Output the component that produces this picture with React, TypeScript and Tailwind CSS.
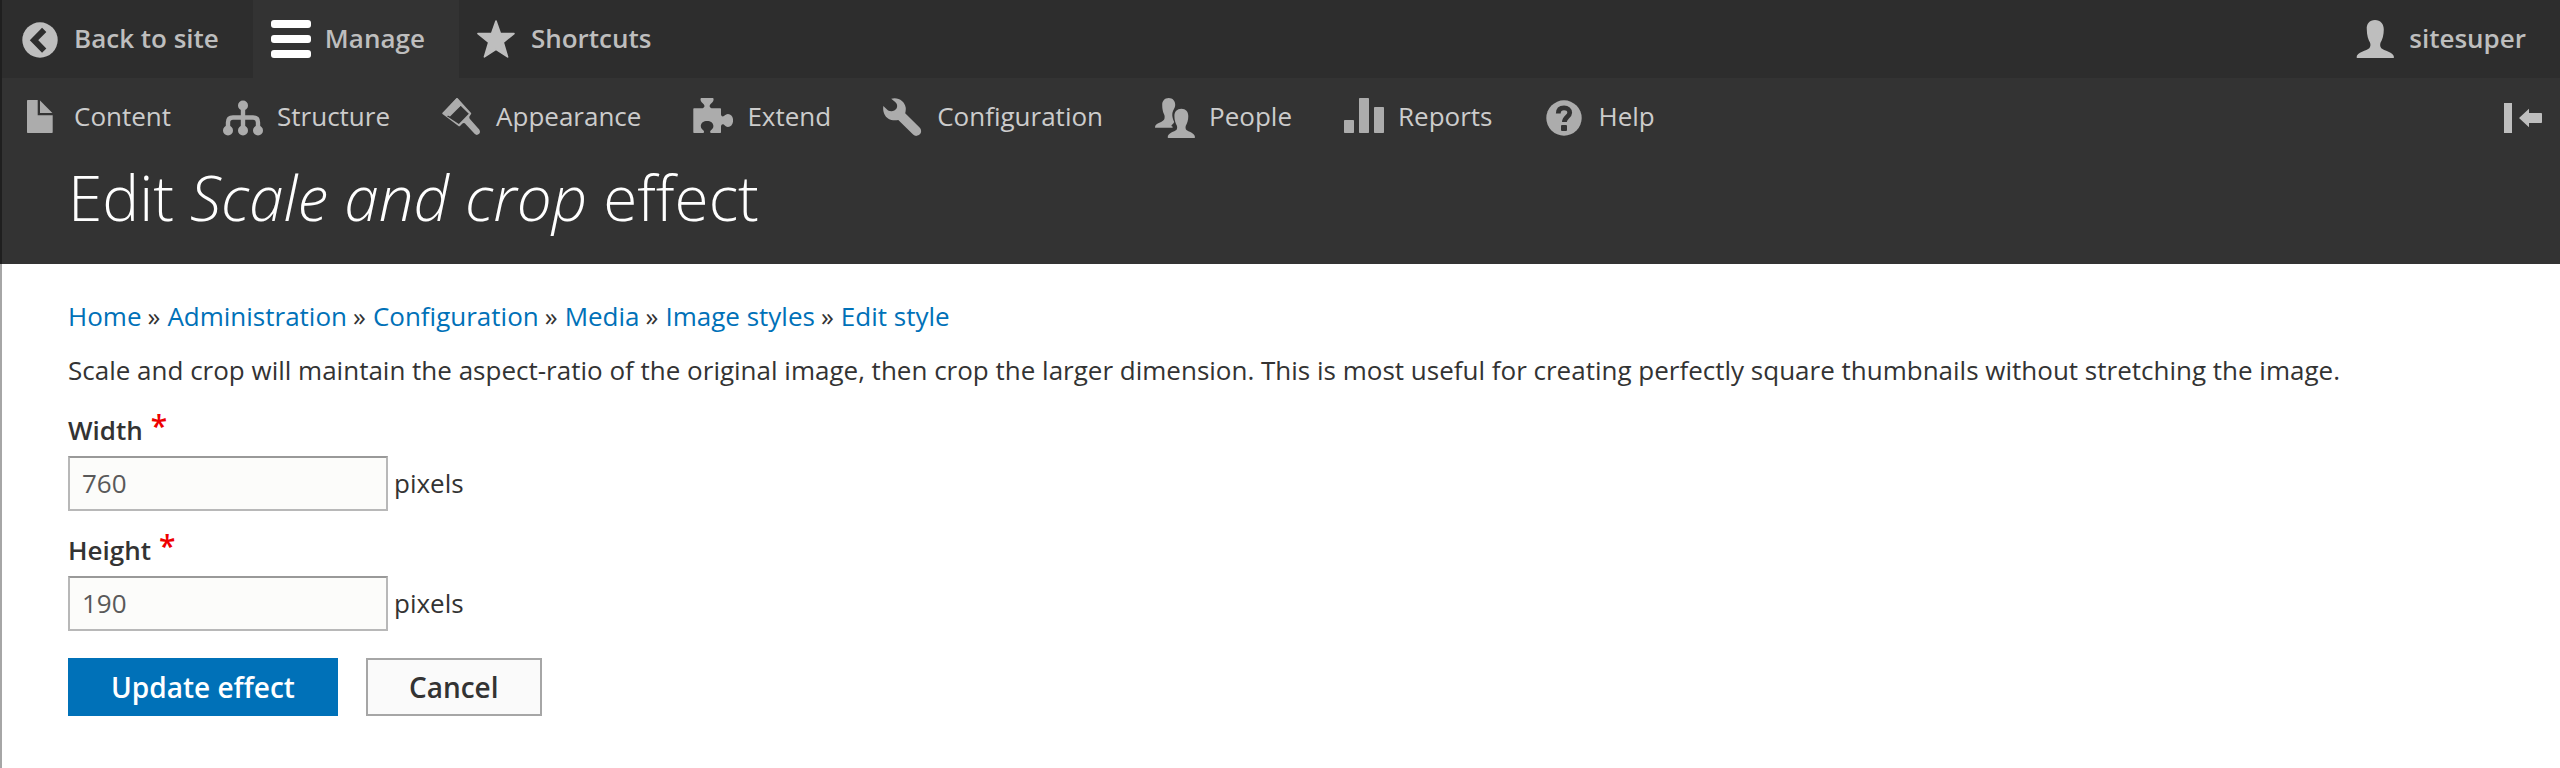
import type { ReactNode } from "react";

function Icon({ children }: { children: ReactNode }) {
  return (
    <svg viewBox="0 0 40 40" className="size-10 shrink-0" fill="currentColor" aria-hidden="true">
      {children}
    </svg>
  );
}

const icons = {
  back: (
    <Icon>
      <circle cx="20" cy="20" r="17.7" />
      <path d="M24.2 9.8 14 20.2 24.2 30.6" fill="none" stroke="#2d2d2d" strokeWidth="6" />
    </Icon>
  ),
  menu: (
    <Icon>
      <rect x="0" y="0" width="40" height="8" rx="3" />
      <rect x="0" y="15" width="40" height="8" rx="3" />
      <rect x="0" y="30" width="40" height="8" rx="3" />
    </Icon>
  ),
  star: (
    <Icon>
      <path
        d="M19 1 23.3 13.3 37 13.6 26.2 22.3 30.6 36.9 19 29.4 7.4 36.9 11.8 22.3 1 13.6 14.7 13.3Z"
        stroke="currentColor"
        strokeWidth="1.6"
        strokeLinejoin="round"
      />
    </Icon>
  ),
  user: (
    <Icon>
      <path d="M20 0c5.500 0 8.800 4 8.800 9.500 0 5.500-1.500 10.500-3.300 13.300-.6 2-.4 4 .8 5.400 2.200 2.200 12.700 4 12.700 9.100 0 .5-.2.700-.7.700h-36c-.5 0-.7-.2-.7-.7 0-5.100 10.500-6.900 12.700-9.100 1.200-1.400 1.400-3.400.8-5.400-1.800-2.800-3.300-7.800-3.300-13.300C11.200 4 14.500 0 20 0Z" />
    </Icon>
  ),
  file: (
    <Icon>
      <path d="M7.700 2h10v15.300h15v17q0 .7-.7.700h-24.300q-.7 0-.7-.7v-31.600q0-.7.7-.7Z" />
      <path d="M20 2.600 32.400 15H20Z" />
    </Icon>
  ),
  structure: (
    <Icon>
      <path
        d="M5 32V24.500q0-5 5-5h20q5 0 5 5V32M20 8v24"
        fill="none"
        stroke="currentColor"
        strokeWidth="4.400"
      />
      <circle cx="20" cy="7.500" r="5" />
      <circle cx="5" cy="32.500" r="5" />
      <circle cx="20" cy="32.500" r="5" />
      <circle cx="35" cy="32.500" r="5" />
    </Icon>
  ),
  brush: (
    <Icon>
      <path
        fillRule="evenodd"
        d="M14.300.3q.7-.6 1.400 0L29.300 15.300q-.4 1.700-1.800 2.900-.5 1.700.4 2.800l9.300 10.500q1.600 2.400 0 4.300-2.300 2-4.400.3l-10-10.900q-1.400-.8-2.900.7-1.200 1.800-2.800 2.500L.5 16q-.5-.6 0-1.200ZM18.600 7.700 5 18.300 16.800 26 26.800 15.800Z"
      />
      <path d="M15 0 20 6.500 8 18.500 1 15.300Z" />
    </Icon>
  ),
  puzzle: (
    <Icon>
      <path d="M.3 10.900q0-.7.700-.7h8.700c1.900-.5 2.300-2.500 1-4C9.500 4.600 7.500 3.800 7.500 1.400 7.500.5 7.900.1 8.700.1h10.700c.8 0 1.200.4 1.200 1.300 0 2.400-2 3.200-3.200 4.800-1.300 1.500-.9 3.500 1 4h8.900q.7 0 .7.700v5.600c.3 1.900 1.700 2.500 3 1.500 1.200-1 2.200-2 4-2 3.200 0 5.100 2.900 5.100 6.400s-1.900 6.500-5.100 6.500c-1.800 0-2.800-1.100-4-2.100-1.300-1-2.700-.4-3 1.500v6q0 .7-.7.700h-8.600c-1.600 0-2.100-1.300-1-2.600 1-1 2.700-1.800 2.700-4.400 0-3.100-2.900-5-6.300-5s-6.300 1.900-6.300 5c0 2.600 1.700 3.400 2.700 4.400 1.100 1.300.6 2.600-1 2.600H1q-.7 0-.7-.7Z" />
    </Icon>
  ),
  wrench: (
    <Icon>
      <path d="M8.200.7C15-1.400 21.800 3.200 22.700 9.500c.3 2-.1 4-.5 5.700L36.600 29.600a4.600 4.600 0 0 1-6.500 7L15.300 21.900C9.500 23.300 3.500 21.200 1.200 15.700 0 13 .1 10.600.3 8l4.800 4.500c3.200 1.400 6.900.6 8.400-1.900 1.200-2.700.7-4.800-1.300-6.600Z" />
    </Icon>
  ),
  people: (
    <Icon>
      <path d="M13.700 0c4 0 6.500 2.900 6.500 6.700 0 1.600-.5 2.900-1.200 4.300-2.500 3.600-2 8.400.2 13.100-.6 1.800-2.800 2.700-2.800 3.800l1.600 1.200-.8.700H.6q-.6 0-.6-.6c0-4.200 8.600-5 9.400-8.200.4-2 .4-3.400-.6-5.200-1-2.400-1.600-5.400-1.600-9.100C7.200 2.900 9.700 0 13.700 0Z" />
      <path d="M26.400 10.700c4.400 0 6.900 2.900 6.900 7.200 0 4-1.100 7.500-2.500 9.800-.5 1.500-.3 3.200.6 4.300C33 33.600 40 34.700 40 39.300q0 .7-.7.700H13.400q-.7 0-.7-.7c0-4.600 7-5.700 8.600-7.300.9-1.100 1.100-2.800.6-4.300-1.400-2.300-2.500-5.800-2.500-9.800 0-4.300 2.600-7.200 7-7.200Z" />
    </Icon>
  ),
  chart: (
    <Icon>
      <rect x="0" y="22" width="10" height="13" rx="0.7" />
      <rect x="15" y="0" width="10" height="35" rx="0.7" />
      <rect x="30" y="9" width="10" height="26" rx="0.7" />
    </Icon>
  ),
  help: (
    <Icon>
      <circle cx="20" cy="20" r="17.700" />
      <path
        d="M14.300 15.500C14.300 11.600 16.600 9.900 20 9.900c3.600 0 5.700 2 5.700 4.800 0 3.800-5.300 4.300-5.300 9.300"
        fill="none"
        stroke="#333333"
        strokeWidth="4.800"
      />
      <rect x="17" y="27" width="6" height="6" rx="1" fill="#333333" />
    </Icon>
  ),
  collapse: (
    <Icon>
      <path d="M1 5h8v30H1ZM16 20 26 10.700V15h12.200q.8 0 .8.800v8.400q0 .8-.8.800H26v4.300Z" />
    </Icon>
  ),
};

const tray: { label: string; icon: ReactNode }[] = [
  { label: "Content", icon: icons.file },
  { label: "Structure", icon: icons.structure },
  { label: "Appearance", icon: icons.brush },
  { label: "Extend", icon: icons.puzzle },
  { label: "Configuration", icon: icons.wrench },
  { label: "People", icon: icons.people },
  { label: "Reports", icon: icons.chart },
  { label: "Help", icon: icons.help },
];

const crumbs = ["Home", "Administration", "Configuration", "Media", "Image styles", "Edit style"];

const itemClass = "flex h-[78px] items-start gap-[14px] pl-[18px] pr-[34px] pt-5";

function SizeField({ id, label, value }: { id: string; label: string; value: string }) {
  return (
    <div>
      <label htmlFor={id} className="flex gap-2 font-semibold leading-9">
        {label}
        <span className="text-[30px] leading-7 text-[#ee0000]">*</span>
      </label>
      <div className="mt-2 flex items-center gap-[6px]">
        <input
          id={id}
          type="text"
          defaultValue={value}
          className="h-[55px] w-80 rounded-none border-2 border-[#b8b8b8] border-t-[#999999] bg-[#fcfcfa] px-3 pb-[2px] text-[#595959] outline-none"
        />
        <span className="pb-[2px]">pixels</span>
      </div>
    </div>
  );
}

export default function App() {
  return (
    <div className="min-h-screen border-l-2 border-[#a6a6a6] bg-white font-['Open_Sans',sans-serif] text-[26px] leading-9 text-[#333333]">
      <header className="-ml-[2px] border-l-2 border-[#1f1f1f] bg-[#333333]">
        <nav aria-label="Toolbar" className="flex bg-[#2d2d2d] font-semibold text-[#bebebe]">
          <a href="#site" className={itemClass}>
            {icons.back}
            Back to site
          </a>
          <a href="#manage" className={`${itemClass} bg-[#333333]`}>
            <span className="text-white">{icons.menu}</span>
            Manage
          </a>
          <a href="#shortcuts" className={itemClass}>
            {icons.star}
            Shortcuts
          </a>
          <a href="#user" className={`${itemClass} ml-auto`}>
            {icons.user}
            sitesuper
          </a>
        </nav>
        <nav aria-label="Administration menu" className="flex text-[#cccccc]">
          {tray.map((item) => (
            <a key={item.label} href={`#${item.label.toLowerCase()}`} className={itemClass}>
              <span className="text-[#acacac]">{item.icon}</span>
              {item.label}
            </a>
          ))}
          <button type="button" aria-label="Vertical orientation" className="ml-auto flex items-start pr-[17px] pt-5 text-[#bebebe]">
            {icons.collapse}
          </button>
        </nav>
        <h1 className="px-[66px] pb-[26px] text-[62px] font-light leading-[82px] text-white">
          Edit <em>Scale and crop</em> effect
        </h1>
      </header>
      <main className="px-[66px] pt-[34px]">
        <nav aria-label="Breadcrumb">
          <ol className="flex gap-[6px]">
            {crumbs.map((crumb, i) => (
              <li key={crumb} className="flex gap-[7px]">
                {i > 0 && <span>»</span>}
                <a href={`#${crumb}`} className="text-[#0071b8]">
                  {crumb}
                </a>
              </li>
            ))}
          </ol>
        </nav>
        <p className="mt-[18px]">
          Scale and crop will maintain the aspect-ratio of the original image, then crop the larger dimension. This is
          most useful for creating perfectly square thumbnails without stretching the image.
        </p>
        <form className="mt-6 flex flex-col gap-[21px]" onSubmit={(e) => e.preventDefault()}>
          <SizeField id="width" label="Width" value="760" />
          <SizeField id="height" label="Height" value="190" />
          <div className="mt-[6px] flex gap-7 text-[28px] font-semibold">
            <button type="submit" className="h-[58px] bg-[#0071b8] px-[43px] text-white">
              Update effect
            </button>
            <button type="button" className="h-[58px] border-2 border-[#a6a6a6] bg-[#fafafa] px-[41px]">
              Cancel
            </button>
          </div>
        </form>
      </main>
    </div>
  );
}
